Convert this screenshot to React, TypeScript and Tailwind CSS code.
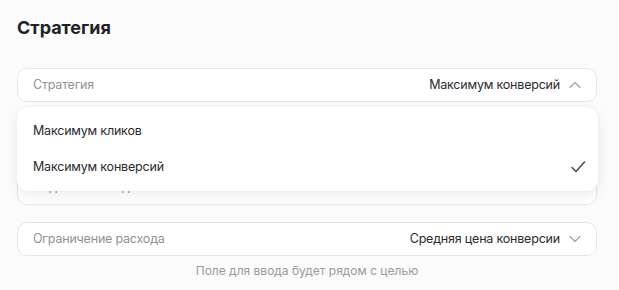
import React from 'react'

const Chevron = ({ up = false }: { up?: boolean }) => (
  <svg width="14" height="14" viewBox="0 0 14 14" fill="none" className="shrink-0">
    <path
      d={up ? 'M2 9.5 7 4.5l5 5' : 'M2 4.5l5 5 5-5'}
      stroke="#a3a3a8"
      strokeWidth="1.2"
      strokeLinecap="round"
      strokeLinejoin="round"
    />
  </svg>
)

const Check = () => (
  <svg width="16" height="16" viewBox="0 0 16 16" fill="none">
    <path d="M2 8.5 6 12.5 14.5 3" stroke="#4a4a4f" strokeWidth="1.5" strokeLinecap="round" strokeLinejoin="round" />
  </svg>
)

type FieldProps = { label: string; value?: string; up?: boolean }

const Field = ({ label, value, up }: FieldProps) => (
  <div className="flex h-[34px] items-center justify-between rounded-[10px] border border-[#e7e7eb] bg-white pl-[15px] pr-[14px] text-[12.5px] tracking-[-0.2px]">
    <span className="text-[#919196]">{label}</span>
    <div className="flex items-center gap-[8px]">
      {value && <span className="text-[#2b2b2f]">{value}</span>}
      <Chevron up={up} />
    </div>
  </div>
)

export default function App() {
  return (
    <div
      className="h-[290px] w-[619px] bg-[#fbfbfc] pl-[17px] pt-[14px]"
      style={{ fontFamily: 'Inter, "Noto Sans", sans-serif' }}
    >
      <h1 className="text-[18px] font-bold leading-[28px] text-[#222226]">Стратегия</h1>

      <div className="relative mt-[26px] flex w-[580px] flex-col gap-[17.3px]">
        <Field label="Стратегия" value="Максимум конверсий" up />
        <Field label="Цель" value="Покупка" />
        <Field label="Недельный бюджет" />
        <Field label="Ограничение расхода" value="Средняя цена конверсии" />

        <div className="absolute left-0 right-[-1px] top-[39px] rounded-[10px] bg-white py-[6px] text-[12.5px] tracking-[-0.2px] text-[#2b2b2f] shadow-[0_4px_14px_rgba(0,0,0,0.08),0_0_1px_rgba(0,0,0,0.12)]">
          <div className="flex h-[36px] items-center pl-[16px]">Максимум кликов</div>
          <div className="flex h-[36px] items-center justify-between pl-[16px] pr-[12px]">
            <span>Максимум конверсий</span>
            <Check />
          </div>
        </div>
      </div>

      <p className="mt-[6px] w-[580px] text-center text-[12px] text-[#9a9a9f]">
        Поле для ввода будет рядом с целью
      </p>
    </div>
  )
}
